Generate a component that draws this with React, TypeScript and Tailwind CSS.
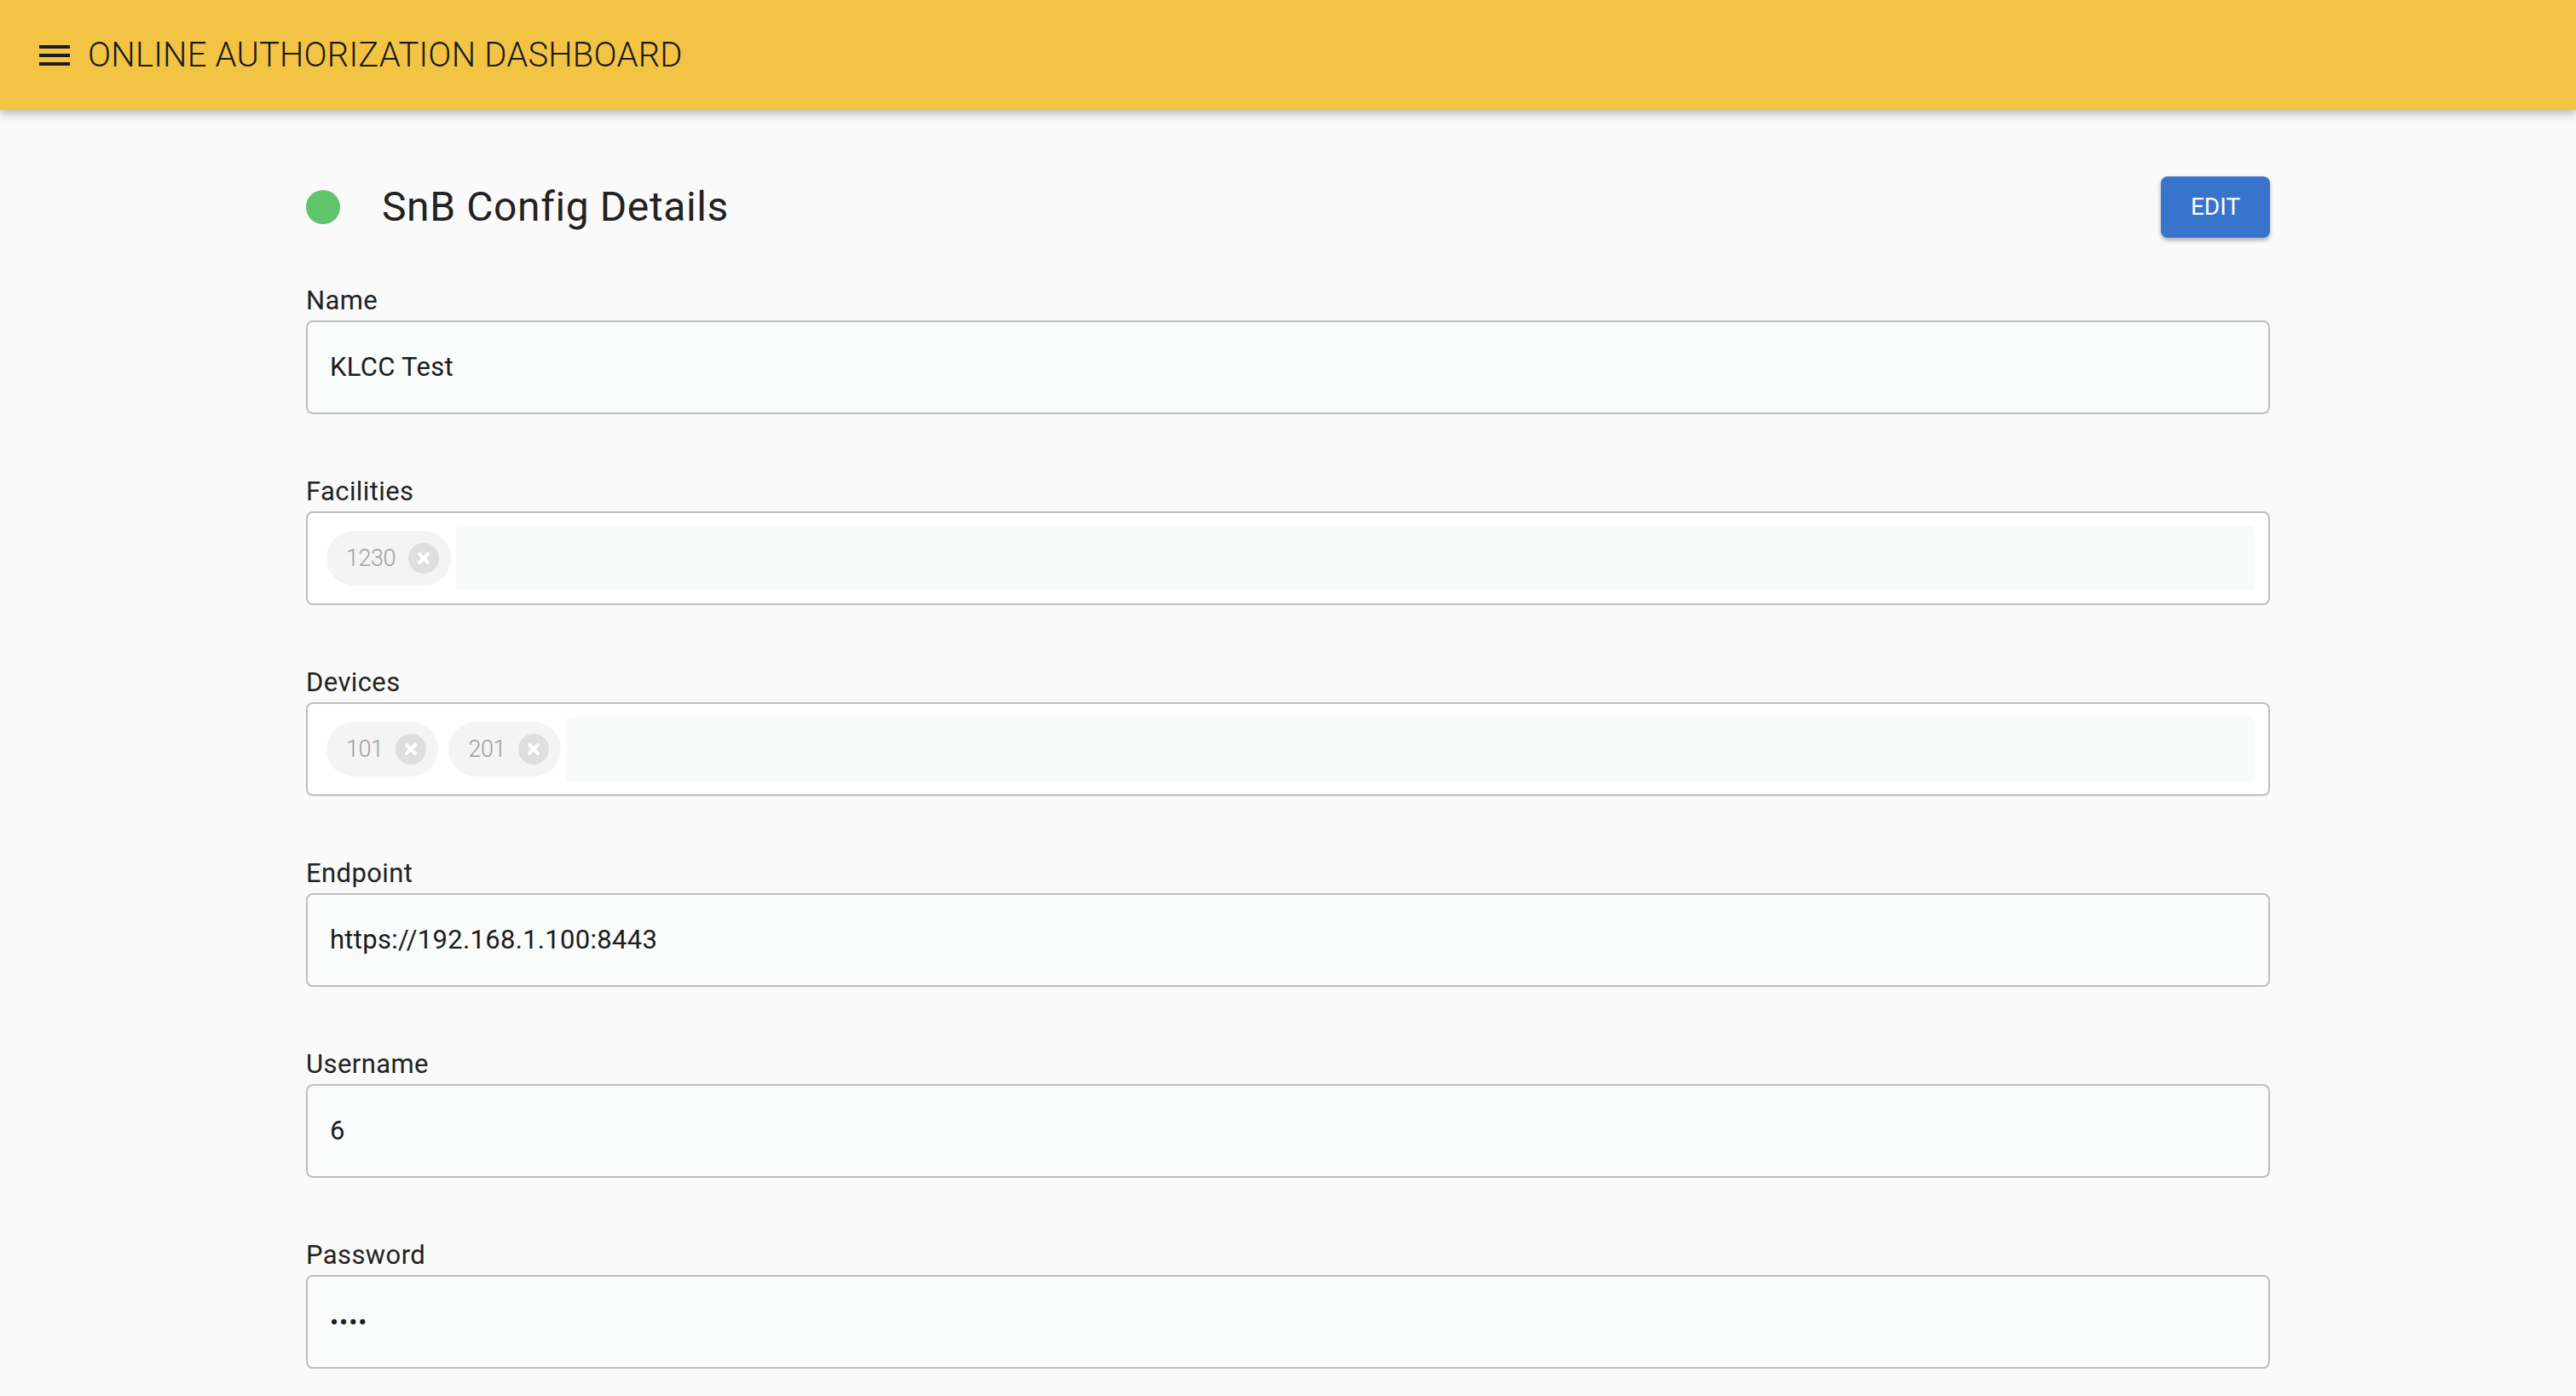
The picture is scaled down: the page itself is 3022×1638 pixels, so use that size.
import { useState } from "react";

type Field = {
  label: string;
  value?: string;
  chips?: string[];
  password?: boolean;
};

const fields: Field[] = [
  { label: "Name", value: "KLCC Test" },
  { label: "Facilities", chips: ["1230"] },
  { label: "Devices", chips: ["101", "201"] },
  { label: "Endpoint", value: "https://192.168.1.100:8443" },
  { label: "Username", value: "6" },
  { label: "Password", value: "••••", password: true },
];

function MenuIcon() {
  return (
    <svg width="48" height="48" viewBox="0 0 24 24" fill="#1a1a1a">
      <path d="M3 18h18v-2H3v2zm0-5h18v-2H3v2zm0-7v2h18V6H3z" />
    </svg>
  );
}

function Chip({ text }: { text: string }) {
  return (
    <div className="mx-[6px] flex h-[64px] items-center rounded-full bg-[#f4f4f4] pl-[23px] pr-[14px]">
      <span className="text-[27px] font-light tracking-[-0.5px] text-[#9c9c9c]">{text}</span>
      <span className="ml-[15px] flex h-[36px] w-[36px] items-center justify-center rounded-full bg-[#dedede]">
        <svg width="18" height="18" viewBox="0 0 18 18">
          <path d="M4 4L14 14M14 4L4 14" stroke="#ffffff" strokeWidth="4" strokeLinecap="round" />
        </svg>
      </span>
    </div>
  );
}

function FormField({ field }: { field: Field }) {
  return (
    <div className="mb-[73px]">
      <div className="text-[31px] leading-[36px] tracking-[0.4px] text-[#222222]">{field.label}</div>
      {field.chips ? (
        <div className="mt-[5px] flex h-[110px] items-center rounded-[8px] border-2 border-[#bfbfbf] bg-white pl-[16px] pr-[15px]">
          {field.chips.map((c) => (
            <Chip key={c} text={c} />
          ))}
          <div className="h-[76px] flex-1 rounded-[6px] bg-[#f9fafa]" />
        </div>
      ) : (
        <div className="mt-[5px] flex h-[110px] items-center rounded-[8px] border-2 border-[#bfbfbf] bg-[#fafbfb] pl-[26px] text-[31px] tracking-[0.3px] text-[#1b1b1b]">
          {field.password ? (
            <span className="text-[30px] tracking-[1px]">{field.value}</span>
          ) : (
            field.value
          )}
        </div>
      )}
    </div>
  );
}

export default function App() {
  const [editing, setEditing] = useState(false);

  return (
    <div className="h-screen overflow-hidden bg-[#fafafa] font-['Roboto',sans-serif]">
      <header className="relative z-10 flex h-[129px] items-center bg-[#f3c443] pl-[40px] shadow-[0_4px_10px_rgba(0,0,0,0.28)]">
        <MenuIcon />
        <h1 className="ml-[15px] text-[40px] font-light tracking-[0.2px] text-[#1a1a1a]">
          ONLINE AUTHORIZATION DASHBOARD
        </h1>
      </header>

      <main className="mx-auto max-w-[2400px] px-[48px] pt-[77px]">
        <div className="flex h-[73px] items-center justify-between">
          <div className="flex items-center">
            <div className="h-[40px] w-[40px] rounded-full bg-[#5fc46a]" />
            <h2 className="ml-[49px] text-[48px] tracking-[0.6px] text-[#222222]">SnB Config Details</h2>
          </div>
          <button
            onClick={() => setEditing(!editing)}
            className="h-[72px] w-[128px] rounded-[8px] bg-[#3874cb] text-[28px] text-white shadow-[0_3px_5px_rgba(0,0,0,0.3)]"
          >
            EDIT
          </button>
        </div>

        <div className="mt-[56px]">
          {fields.map((f) => (
            <FormField key={f.label} field={f} />
          ))}
        </div>
      </main>
    </div>
  );
}
